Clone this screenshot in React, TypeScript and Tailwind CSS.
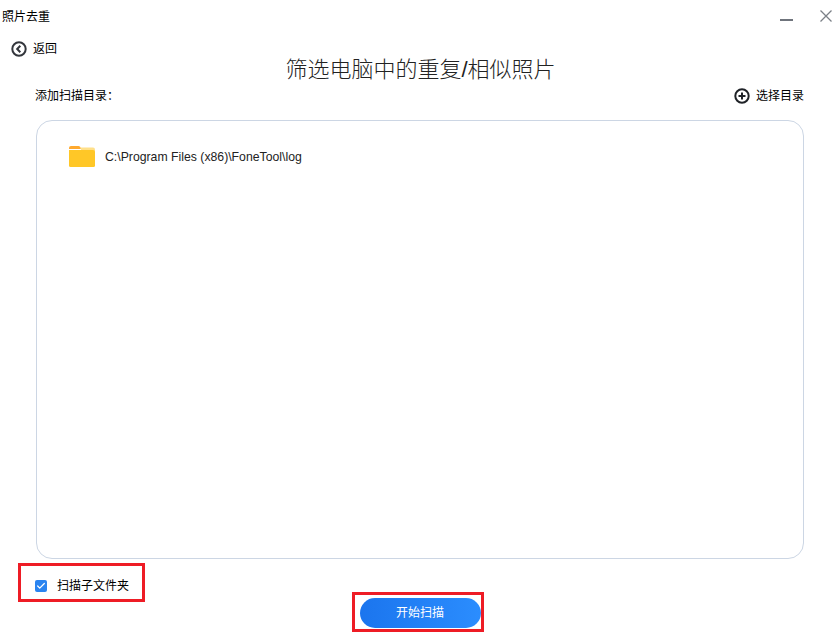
import React from 'react';
import { Check } from 'lucide-react';

const font = "[font-family:'Liberation_Sans','Noto_Sans_CJK_SC',sans-serif]";

function FolderIcon() {
  return (
    <svg width="26" height="21" viewBox="0 0 26 21" className="shrink-0">
      <path d="M0 2a2 2 0 0 1 2-2h7.500a2 2 0 0 1 1.500.7L12.500 3H0z" fill="#ffa92e" />
      <path d="M11 1.500h13a2 2 0 0 1 2 2V6H13z" fill="#ffe08a" />
      <path d="M0 4h24a2 2 0 0 1 2 2V19.500a1.500 1.500 0 0 1-1.500 1.500H1.500A1.500 1.500 0 0 1 0 19.500z" fill="#ffc727" />
    </svg>
  );
}

function BackIcon() {
  return (
    <svg width="16" height="16" viewBox="0 0 16 16" fill="none" stroke="#33363c" className="shrink-0">
      <circle cx="8" cy="8" r="6.700" strokeWidth="2" />
      <path d="M9.300 4.800 6.200 8l3.100 3.200" strokeWidth="2" />
    </svg>
  );
}

function PlusIcon() {
  return (
    <svg width="16" height="16" viewBox="0 0 16 16" fill="none" stroke="#1f2227" className="shrink-0">
      <circle cx="8" cy="8" r="6.700" strokeWidth="2" />
      <path d="M8 4.500v7M4.500 8h7" strokeWidth="2" />
    </svg>
  );
}

function CloseIcon() {
  return (
    <svg width="12" height="12" viewBox="0 0 12 12" fill="none" stroke="#7b8087" strokeWidth="1.300" className="shrink-0">
      <path d="M.5.5l11 11M11.500.5l-11 11" />
    </svg>
  );
}

export default function App() {
  return (
    <div className={`${font} relative flex h-[643px] w-[836px] flex-col overflow-hidden bg-white text-black`}>
      {/* window title bar */}
      <div className="flex h-[35px] items-start justify-between pl-[2px] pr-[4px] pt-[10px]">
        <span className="text-[12px] leading-[15px]">照片去重</span>
        <div className="flex items-start gap-[27px]">
          <div className="mt-[9px] h-[2px] w-[13px] bg-[#6f747c]" />
          <CloseIcon />
        </div>
      </div>

      <div className="mt-[6px] flex h-[16px] items-center gap-[6px] pl-[11px]">
        <BackIcon />
        <span className="text-[12px]">返回</span>
      </div>

      <h1 className="-mt-[1px] pl-[5px] text-center text-[22px] font-light leading-[28px] text-[#222]">筛选电脑中的重复/相似照片</h1>

      <div className="mt-[4px] flex h-[16px] items-center justify-between pl-[35px] pr-[32px]">
        <span className="text-[12px]">添加扫描目录：</span>
        <div className="flex items-center gap-[6px]">
          <PlusIcon />
          <span className="text-[12px]">选择目录</span>
        </div>
      </div>

      <div className="ml-[36px] mt-[16px] h-[439px] w-[768px] rounded-[16px] border border-[#ccd6e4] pl-[32px] pt-[25px]">
        <div className="flex items-center gap-[10px]">
          <FolderIcon />
          <span className="pt-[1px] text-[12.25px] text-[#222]">C:\Program Files (x86)\FoneTool\log</span>
        </div>
      </div>

      <div className="mt-[20px] flex h-[14px] items-center pl-[35px]">
        <span className="flex h-[12px] w-[12px] items-center justify-center rounded-[2px] bg-[#2a84f0]">
          <Check className="h-[10px] w-[10px] text-white" strokeWidth={3} />
        </span>
        <span className="ml-[10px] text-[12px]">扫描子文件夹</span>
      </div>

      <div className="mt-[5px] flex justify-center pl-[4px]">
        <button className="h-[30px] w-[121px] rounded-full bg-gradient-to-r from-[#1b75ee] to-[#2b8dfe] text-[12px] text-white">
          开始扫描
        </button>
      </div>

      {/* red annotation boxes */}
      <div className="absolute left-[18px] top-[563px] h-[39px] w-[127px] border-[3px] border-[#ee1c25]" />
      <div className="absolute left-[352px] top-[592px] h-[40px] w-[132px] border-[3px] border-[#ee1c25]" />
    </div>
  );
}
